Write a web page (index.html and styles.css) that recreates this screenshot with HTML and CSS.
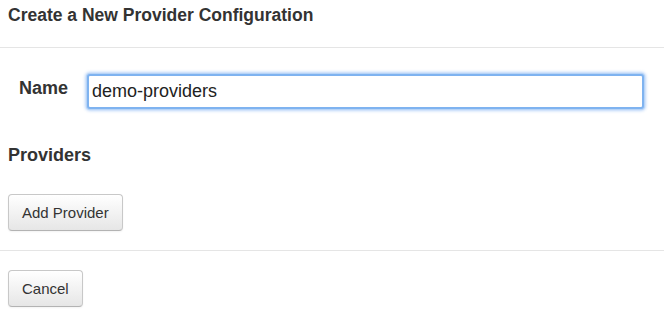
FILE: index.html
```html
<!DOCTYPE html>
<html>
<head>
<meta charset="utf-8">
<link rel="stylesheet" href="styles.css">
</head>
<body>
<div class="modal">
  <div class="modal-header">
    <h3 class="title">Create a New Provider Configuration</h3>
  </div>
  <div class="modal-body">
    <div class="name-row">
      <label class="name-label">Name</label>
      <input class="name-input" type="text" value="demo-providers">
    </div>
    <h4 class="section-title">Providers</h4>
    <button class="btn">Add Provider</button>
  </div>
  <div class="modal-footer">
    <button class="btn">Cancel</button>
  </div>
</div>
</body>
</html>
```
FILE: styles.css
```css
html, body {
  margin: 0;
  padding: 0;
  background: #fff;
}
body {
  font-family: "Liberation Sans", Arial, sans-serif;
  color: #333;
  width: 664px;
  height: 318px;
  overflow: hidden;
}
.modal-header {
  height: 47px;
  border-bottom: 1px solid #e5e5e5;
  padding: 0 8px;
}
.title {
  margin: 0;
  padding-top: 5px;
  font-size: 17.5px;
  line-height: 20px;
  font-weight: bold;
  color: #333;
}
.modal-body {
  padding: 26px 8px 19px 8px;
  border-bottom: 1px solid #e5e5e5;
}
.name-row {
  display: flex;
  align-items: flex-start;
  gap: 19px;
  padding-left: 11px;
}
.name-label {
  font-size: 18px;
  font-weight: bold;
  line-height: 20px;
  margin-top: 4px;
}
.name-input {
  flex: 1;
  box-sizing: border-box;
  height: 35px;
  margin-right: 12px;
  border: 2px solid #7fb3f0;
  border-radius: 3px;
  box-shadow: 0 0 0 1px #b7d4f7, 0 0 3px 2px rgba(100, 160, 240, 0.45);
  padding: 0 4px 0 3px;
  font-family: "Liberation Sans", Arial, sans-serif;
  font-size: 18px;
  color: #222;
  outline: none;
}
.section-title {
  margin: 36px 0 0 0;
  font-size: 18px;
  line-height: 20px;
  font-weight: bold;
}
.btn {
  display: block;
  box-sizing: border-box;
  height: 37px;
  padding: 0 13px;
  font-family: "Liberation Sans", Arial, sans-serif;
  font-size: 15px;
  color: #333;
  background: linear-gradient(#ffffff, #e6e6e6);
  border: 1px solid #c8c8c8;
  border-bottom-color: #b3b3b3;
  border-radius: 4px;
  box-shadow: inset 0 1px 0 rgba(255,255,255,0.2), 0 1px 2px rgba(0,0,0,0.05);
}
.modal-body .btn {
  margin-top: 29px;
}
.modal-footer {
  padding: 19px 8px 0 8px;
}
```
